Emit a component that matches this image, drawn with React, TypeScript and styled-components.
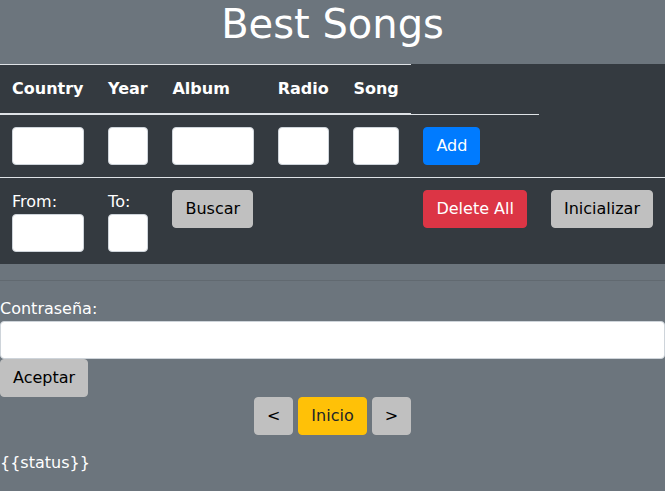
import React from "react";
import styled, { createGlobalStyle, css } from "styled-components";

const Global = createGlobalStyle`
  *, *::before, *::after { box-sizing: border-box; }
  html, body { margin: 0; padding: 0; }
  body {
    background: #6c757d;
    color: #fff;
    font-family: "DejaVu Sans", sans-serif;
    font-size: 16px;
    line-height: 1.5;
  }
`;

const Page = styled.div`
  display: flex;
  flex-direction: column;
`;

const Title = styled.h1`
  margin: 0 0 16px;
  font-size: 40px;
  font-weight: 400;
  line-height: 1.2;
  text-align: center;
  color: #fff;
`;

const Table = styled.table`
  width: 100%;
  border-collapse: collapse;
  background: #343a40;
  color: #fff;
  margin-bottom: 16px;
`;

const Th = styled.th`
  padding: 12px;
  text-align: left;
  vertical-align: bottom;
  font-weight: 700;
  border-top: 1px solid #dee2e6;
  border-bottom: 2px solid #dee2e6;
  white-space: nowrap;
`;

const Td = styled.td`
  padding: 12px;
  vertical-align: top;
  border-top: 1px solid #dee2e6;
`;

const Input = styled.input`
  display: block;
  width: 100%;
  height: 38px;
  padding: 6px 12px;
  font: inherit;
  color: #495057;
  background: #fff;
  border: 1px solid #ced4da;
  border-radius: 4px;
`;

const CellLabel = styled.label`
  display: block;
  white-space: nowrap;
`;

type Variant = "primary" | "danger" | "silver" | "warning";

const variants: Record<Variant, ReturnType<typeof css>> = {
  primary: css`
    background: #007bff;
    border-color: #007bff;
    color: #fff;
  `,
  danger: css`
    background: #dc3545;
    border-color: #dc3545;
    color: #fff;
  `,
  silver: css`
    background: #c0c0c0;
    border-color: #c0c0c0;
    color: #000;
  `,
  warning: css`
    background: #ffc107;
    border-color: #ffc107;
    color: #212529;
  `,
};

const Button = styled.button<{ $variant: Variant }>`
  display: inline-block;
  padding: 6px 12px;
  font: inherit;
  line-height: 24px;
  border: 1px solid transparent;
  border-radius: 4px;
  white-space: nowrap;
  vertical-align: top;
  ${(p) => variants[p.$variant]}
`;

const Divider = styled.hr`
  margin: 0 0 16px;
  border: 0;
  border-top: 1px solid rgba(0, 0, 0, 0.1);
`;

const Form = styled.div`
  display: flex;
  flex-direction: column;
  align-items: flex-start;
`;

const FormLabel = styled.label`
  display: block;
`;

const Pager = styled.div`
  display: flex;
  justify-content: center;
  gap: 5px;
`;

const Status = styled.p`
  margin: 16px 0 0;
`;

export default function App() {
  return (
    <Page>
      <Global />
      <Title>Best Songs</Title>
      <Table>
        <thead>
          <tr>
            <Th>Country</Th>
            <Th>Year</Th>
            <Th>Album</Th>
            <Th>Radio</Th>
            <Th>Song</Th>
          </tr>
        </thead>
        <tbody>
          <tr>
            <Td><Input /></Td>
            <Td><Input /></Td>
            <Td><Input /></Td>
            <Td><Input /></Td>
            <Td><Input /></Td>
            <Td><Button $variant="primary">Add</Button></Td>
          </tr>
          <tr>
            <Td>
              <CellLabel>From:</CellLabel>
              <Input />
            </Td>
            <Td>
              <CellLabel>To:</CellLabel>
              <Input />
            </Td>
            <Td><Button $variant="silver">Buscar</Button></Td>
            <Td />
            <Td />
            <Td><Button $variant="danger">Delete All</Button></Td>
            <Td><Button $variant="silver">Inicializar</Button></Td>
          </tr>
        </tbody>
      </Table>
      <Divider />
      <Form>
        <FormLabel>Contraseña:</FormLabel>
        <Input type="password" />
        <Button $variant="silver">Aceptar</Button>
      </Form>
      <Pager>
        <Button $variant="silver">&lt;</Button>
        <Button $variant="warning">Inicio</Button>
        <Button $variant="silver">&gt;</Button>
      </Pager>
      <Status>{"{{status}}"}</Status>
    </Page>
  );
}
